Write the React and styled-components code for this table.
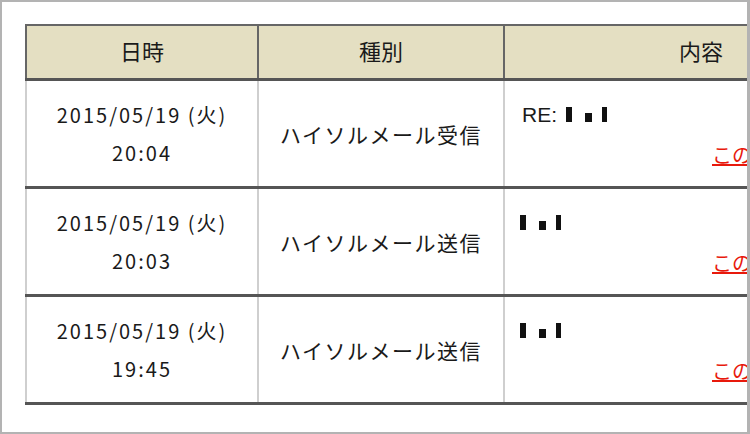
import React from 'react';
import styled, { createGlobalStyle } from 'styled-components';

const GlobalStyle = createGlobalStyle`
  html, body {
    margin: 0;
    padding: 0;
    background: #fff;
  }
`;

const Frame = styled.div`
  box-sizing: border-box;
  width: 750px;
  height: 434px;
  border: 2px solid #b3b3b3;
  border-right-width: 3px;
  padding: 22px 0 0 23px;
  overflow: hidden;
  background: #fff;
  font-family: "Noto Sans CJK JP", sans-serif;
  color: #1a1a1a;
`;

const Table = styled.table`
  border-collapse: collapse;
  table-layout: fixed;
  width: 866px;
  border-left: 2px solid #666;
  border-bottom: 3px solid #555;
`;

const Head = styled.th`
  width: ${p => p.w}px;
  height: 48px;
  padding: 0 0 4px;
  background: #e4dfc2;
  border: 2px solid #666;
  font-size: 22px;
  font-weight: 400;
  text-align: center;
  vertical-align: middle;
`;

const Row = styled.tr`
  border-top: 3px solid #555;
`;

const Cell = styled.td`
  height: 105px;
  padding: 0;
  border-left: 2px solid #cfcfcf;
  text-align: center;
  vertical-align: middle;
`;

const DateCell = styled(Cell)`
  font-size: 20px;
  line-height: 38px;
  letter-spacing: 2px;
`;

const TypeCell = styled(Cell)`
  font-size: 21px;
  letter-spacing: 1.5px;
`;

const ContentCell = styled(Cell)`
  height: 91px;
  text-align: left;
  vertical-align: top;
  padding: 14px 0 0 15px;
  line-height: 40px;
`;

const Subject = styled.div`
  font-family: "Liberation Sans", Arial, sans-serif;
  font-size: 21px;
  height: 40px;
`;

const Prefix = styled.span`
  margin: 0 9px 0 2px;
`;

const Redact = styled.span`
  display: inline-block;
  width: ${p => p.w}px;
  height: ${p => p.h}px;
  margin-right: ${p => p.gap || 0}px;
  background: #111;
  vertical-align: baseline;
`;

const Link = styled.a`
  display: block;
  padding-right: 26px;
  text-align: right;
  font-size: 20px;
  color: #e8190c;
  text-decoration: underline;
`;

const rows = [
  { date: '2015/05/19 (火)', time: '20:04', type: 'ハイソルメール受信', re: true },
  { date: '2015/05/19 (火)', time: '20:03', type: 'ハイソルメール送信', re: false },
  { date: '2015/05/19 (火)', time: '19:45', type: 'ハイソルメール送信', re: false },
];

const Censored = () => (
  <>
    <Redact w={6} h={15} gap={13} />
    <Redact w={7} h={9} gap={10} />
    <Redact w={5} h={15} />
  </>
);

export default function App() {
  return (
    <>
      <GlobalStyle />
      <Frame>
        <Table>
          <thead>
            <tr>
              <Head w={230}>日時</Head>
              <Head w={244}>種別</Head>
              <Head w={392}>内容</Head>
            </tr>
          </thead>
          <tbody>
            {rows.map((r, i) => (
              <Row key={i}>
                <DateCell>
                  {r.date}
                  <br />
                  {r.time}
                </DateCell>
                <TypeCell>{r.type}</TypeCell>
                <ContentCell>
                  <Subject>
                    {r.re && <Prefix>RE:</Prefix>}
                    <Censored />
                  </Subject>
                  <Link href="#">このメールを見る</Link>
                </ContentCell>
              </Row>
            ))}
          </tbody>
        </Table>
      </Frame>
    </>
  );
}
